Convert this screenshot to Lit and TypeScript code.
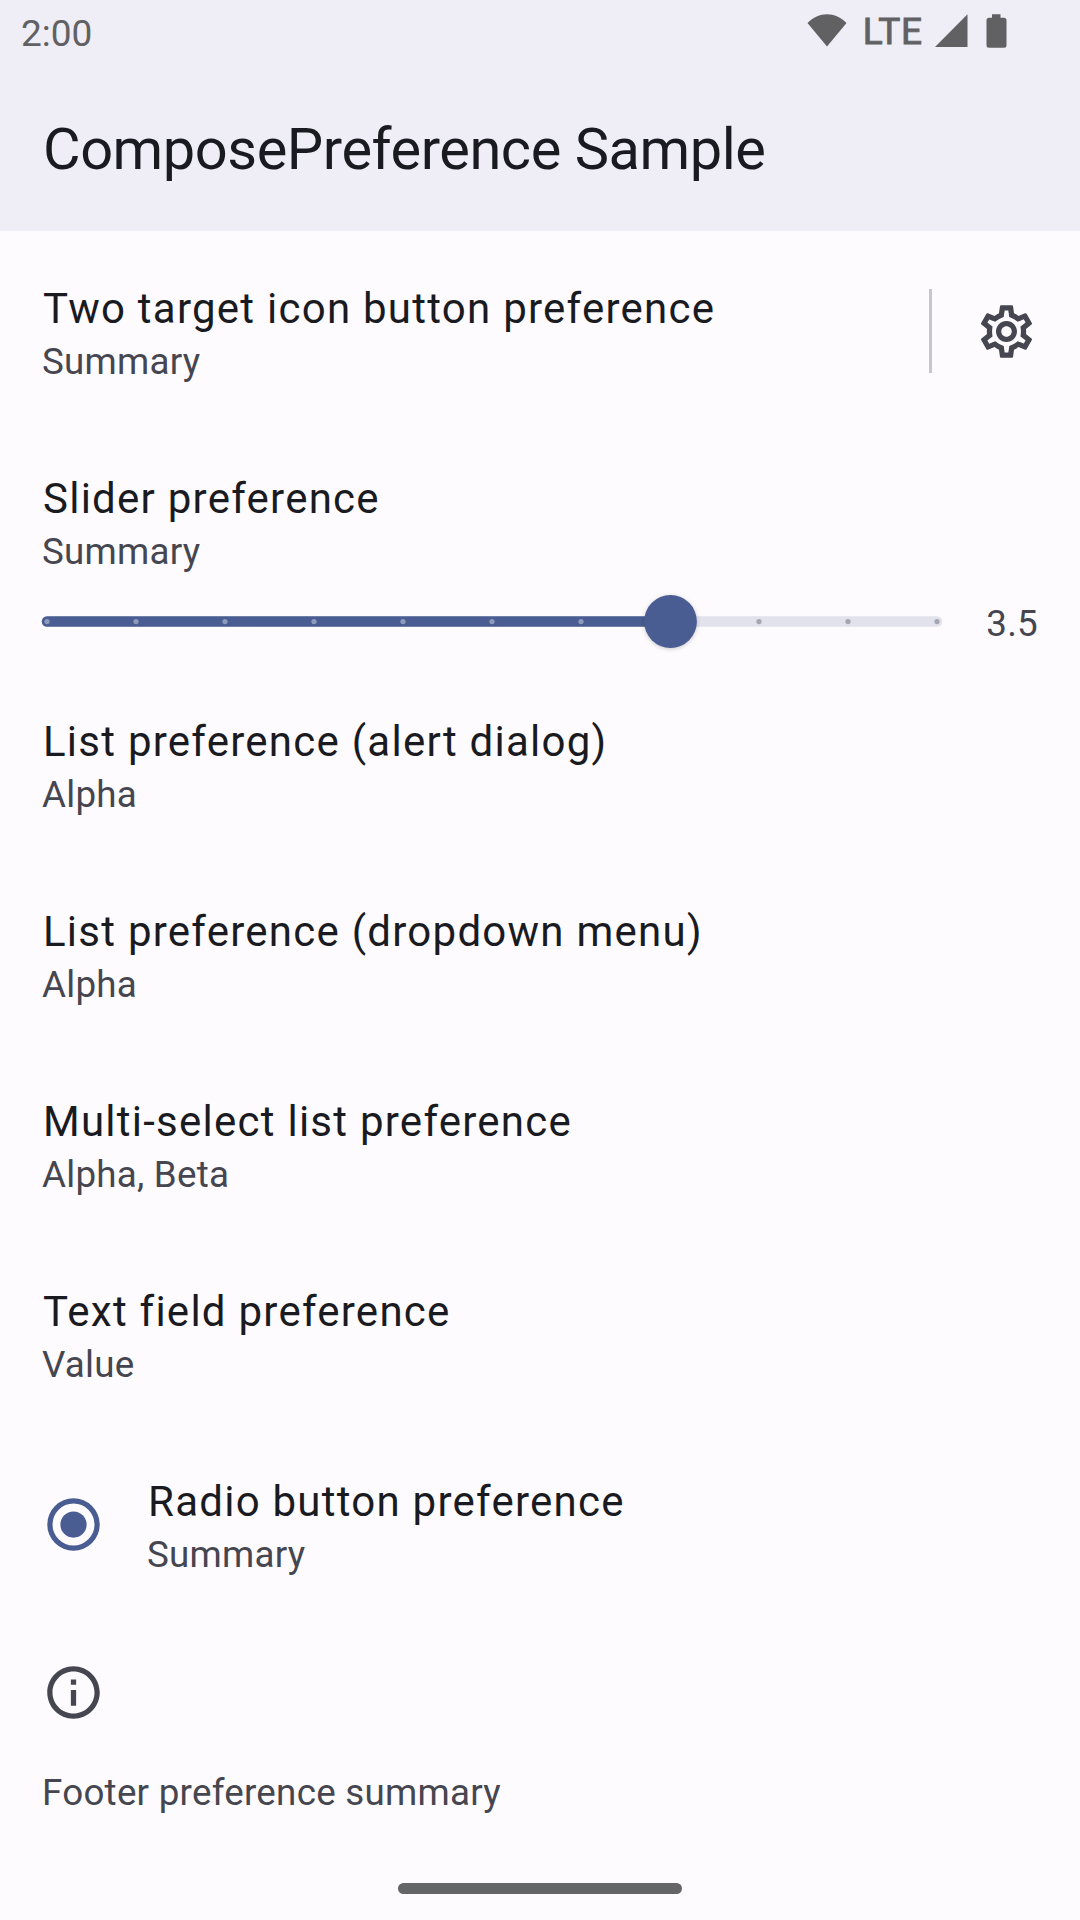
import { LitElement, html, css, svg } from "lit";
import { customElement, property } from "lit/decorators.js";

@customElement("preference-row")
class PreferenceRow extends LitElement {
  @property() heading = "";
  @property() summary = "";

  static styles = css`
    :host { display: flex; align-items: center; height: 190px; padding: 0 42px; box-sizing: border-box; }
    .text { flex: 1; min-width: 0; padding-top: 4px; }
    .heading { font-size: 42px; line-height: 57px; letter-spacing: 1.25px; color: #1a1b21; white-space: nowrap; padding-left: 1px; }
    .summary { font-size: 36.75px; line-height: 49px; letter-spacing: 0.25px; color: #45464f; white-space: nowrap; }
  `;

  render() {
    return html`
      <slot name="leading"></slot>
      <div class="text">
        <div class="heading">${this.heading}</div>
        <div class="summary">${this.summary}</div>
      </div>
      <slot name="trailing"></slot>
    `;
  }
}

@customElement("step-slider")
class StepSlider extends LitElement {
  @property({ type: Number }) value = 0;
  @property({ type: Number }) max = 5;
  @property({ type: Number }) steps = 10;

  static styles = css`
    :host { display: block; width: 900px; height: 53px; }
    svg { display: block; overflow: visible; }
    .rest { fill: #e1e2ec; }
    .filled { fill: #495d92; }
    .tick-on { fill: #ffffff; fill-opacity: 0.38; }
    .tick-off { fill: #45464f; fill-opacity: 0.38; }
    .thumb { fill: #495d92; filter: drop-shadow(0 1.5px 2px rgba(0, 0, 0, 0.2)); }
  `;

  render() {
    const start = 5;
    const span = 890;
    const x = start + (span * this.value) / this.max;
    const ticks = Array.from({ length: this.steps + 1 }, (_, i) => i);
    return html`
      <svg width="900" height="53" viewBox="0 0 900 53">
        <rect class="rest" x="-0.25" y="21.25" width="900.5" height="10.5" rx="5.25"></rect>
        <rect class="filled" x="-0.25" y="21.25" width=${x} height="10.5" rx="5.25"></rect>
        ${ticks.map((i) => {
          const at = i / this.steps;
          const on = at <= this.value / this.max;
          return svg`<circle class=${on ? "tick-on" : "tick-off"} cx=${start + span * at} cy="26.5" r="2.625"></circle>`;
        })}
        <circle class="thumb" cx=${x + 0.5} cy="26.5" r="26.4"></circle>
      </svg>
    `;
  }
}

@customElement("app-root")
class AppRoot extends LitElement {
  static styles = css`
    :host {
      display: flex; flex-direction: column; width: 1080px; height: 1920px; overflow: hidden;
      background: #fefbff; font-family: Roboto, sans-serif; color: #1a1b21;
    }
    svg { display: block; }
    .top { background: #efedf6; height: 231px; flex: none; }
    .status { height: 63px; box-sizing: border-box; padding: 0 69.5px 0 21px; display: flex; align-items: center; color: #616164; }
    .clock { flex: 1; font-size: 37px; line-height: 43px; padding-top: 4px; }
    .lte { font-size: 37px; letter-spacing: 0.6px; fill: #616164; stroke: #616164; stroke-width: 0.9px; }
    .glyph { fill: #616164; }
    .bar { height: 168px; display: flex; align-items: center; padding: 4px 42px 0 43px; box-sizing: border-box; font-size: 57.75px; letter-spacing: -0.45px; }
    .list { flex: 1; padding-top: 5px; }
    .action { display: flex; align-items: center; }
    .divider { width: 3px; height: 84px; background: #c6c5d0; margin-right: 43px; }
    .icon { fill: #45464f; }
    .radio { margin-right: 42px; fill: #495d92; }
    .slider { display: flex; align-items: center; justify-content: space-between; height: 53px; margin: -21px 0 21px; padding: 0 42px; }
    .value { font-size: 36.75px; letter-spacing: 0.25px; color: #45464f; line-height: 52px; padding-top: 4px; }
    .footer { padding: 42px 42px 0; }
    .note { font-size: 36.75px; line-height: 51px; letter-spacing: 0.25px; color: #45464f; padding-top: 43px; }
    .nav { flex: none; height: 63px; display: flex; justify-content: center; align-items: center; }
    .handle { width: 284px; height: 10.5px; border-radius: 6px; background: #656467; }
  `;

  render() {
    return html`
      <header class="top">
        <div class="status">
          <div class="clock">2:00</div>
          <svg width="204" height="63" viewBox="0 0 204 63">
            <path class="glyph" d="M0.5 23C11.5 11.2 28.5 11.2 39.5 23L20 46.5Z"></path>
            <text class="lte" x="55.7" y="44">LTE</text>
            <path class="glyph" d="M128 47H160.500V14.200Z"></path>
            <path class="glyph" d="M185 14.300h8.500v3.400h3.500a2.500 2.500 0 0 1 2.500 2.500v25a2.500 2.500 0 0 1-2.500 2.500h-15a2.500 2.500 0 0 1-2.500-2.500v-25a2.500 2.500 0 0 1 2.500-2.500h3z"></path>
          </svg>
        </div>
        <div class="bar">ComposePreference Sample</div>
      </header>
      <main class="list">
        <preference-row heading="Two target icon button preference" summary="Summary">
          <div slot="trailing" class="action">
            <div class="divider"></div>
            <svg class="icon" width="63" height="63" viewBox="0 0 24 24">
              <path d="M19.43 12.98c.04-.32.07-.64.07-.98 0-.34-.03-.66-.07-.98l2.11-1.65c.19-.15.24-.42.12-.64l-2-3.46c-.09-.16-.26-.25-.44-.25-.06 0-.12.01-.17.03l-2.49 1c-.52-.4-1.08-.73-1.69-.98l-.38-2.65C14.46 2.18 14.25 2 14 2h-4c-.25 0-.46.18-.49.42l-.38 2.65c-.61.25-1.17.59-1.69.98l-2.49-1c-.06-.02-.12-.03-.18-.03-.17 0-.34.09-.43.25l-2 3.46c-.13.22-.07.49.12.64l2.11 1.65c-.04.32-.07.65-.07.98 0 .33.03.66.07.98l-2.11 1.65c-.19.15-.24.42-.12.64l2 3.46c.09.16.26.25.44.25.06 0 .12-.01.17-.03l2.49-1c.52.4 1.08.73 1.69.98l.38 2.65c.03.24.24.42.49.42h4c.25 0 .46-.18.49-.42l.38-2.65c.61-.25 1.17-.59 1.69-.98l2.49 1c.06.02.12.03.18.03.17 0 .34-.09.43-.25l2-3.46c.12-.22.07-.49-.12-.64l-2.11-1.65zm-1.98-1.71c.04.31.05.52.05.73 0 .21-.02.43-.05.73l-.14 1.13.89.7 1.08.84-.7 1.21-1.27-.51-1.04-.42-.9.68c-.43.32-.84.56-1.25.73l-1.06.43-.16 1.13-.2 1.35h-1.4l-.19-1.35-.16-1.13-1.06-.43c-.43-.18-.83-.41-1.23-.71l-.91-.7-1.06.43-1.27.51-.7-1.21 1.08-.84.89-.7-.14-1.13c-.03-.31-.05-.54-.05-.74s.02-.43.05-.73l.14-1.13-.89-.7-1.08-.84.7-1.21 1.27.51 1.04.42.9-.68c.43-.32.84-.56 1.25-.73l1.06-.43.16-1.13.2-1.35h1.39l.19 1.35.16 1.13 1.06.43c.43.18.83.41 1.23.71l.91.7 1.06-.43 1.27-.51.7 1.21-1.07.85-.89.7.14 1.13zM12 8c-2.21 0-4 1.79-4 4s1.79 4 4 4 4-1.79 4-4-1.79-4-4-4zm0 6c-1.1 0-2-.9-2-2s.9-2 2-2 2 .9 2 2-.9 2-2 2z"></path>
            </svg>
          </div>
        </preference-row>
        <preference-row heading="Slider preference" summary="Summary"></preference-row>
        <div class="slider">
          <step-slider .value=${3.5} .max=${5}></step-slider>
          <div class="value">3.5</div>
        </div>
        <preference-row heading="List preference (alert dialog)" summary="Alpha"></preference-row>
        <preference-row heading="List preference (dropdown menu)" summary="Alpha"></preference-row>
        <preference-row heading="Multi-select list preference" summary="Alpha, Beta"></preference-row>
        <preference-row heading="Text field preference" summary="Value"></preference-row>
        <preference-row heading="Radio button preference" summary="Summary">
          <svg slot="leading" class="radio" width="63" height="63" viewBox="0 0 24 24">
            <path d="M12 2a10 10 0 1 0 0 20a10 10 0 1 0 0-20zm0 18a8 8 0 1 1 0-16a8 8 0 1 1 0 16z"></path>
            <circle cx="12" cy="12" r="5"></circle>
          </svg>
        </preference-row>
        <div class="footer">
          <svg class="icon" width="63" height="63" viewBox="0 0 24 24">
            <path d="M11 7h2v2h-2zm0 4h2v6h-2zm1-9C6.48 2 2 6.48 2 12s4.48 10 10 10 10-4.48 10-10S17.52 2 12 2zm0 18c-4.41 0-8-3.59-8-8s3.59-8 8-8 8 3.59 8 8-3.59 8-8 8z"></path>
          </svg>
          <div class="note">Footer preference summary</div>
        </div>
      </main>
      <div class="nav"><div class="handle"></div></div>
    `;
  }
}
